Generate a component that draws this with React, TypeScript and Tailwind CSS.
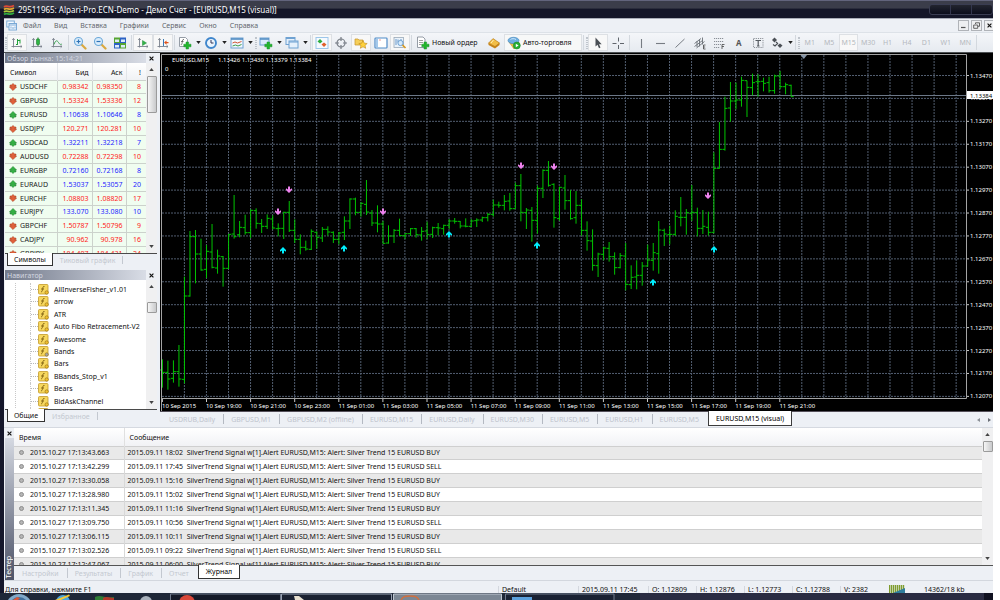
import type { ReactNode } from "react";
import clsx from "clsx";

type Quote = { symbol: string; bid: string; ask: string; spread: number; up: boolean };

const QUOTES: Quote[] = [
    { symbol: "USDCHF", bid: "0.98342", ask: "0.98350", spread: 8, up: false },
    { symbol: "GBPUSD", bid: "1.53324", ask: "1.53336", spread: 12, up: false },
    { symbol: "EURUSD", bid: "1.10638", ask: "1.10646", spread: 8, up: true },
    { symbol: "USDJPY", bid: "120.271", ask: "120.281", spread: 10, up: false },
    { symbol: "USDCAD", bid: "1.32211", ask: "1.32218", spread: 7, up: true },
    { symbol: "AUDUSD", bid: "0.72288", ask: "0.72298", spread: 10, up: false },
    { symbol: "EURGBP", bid: "0.72160", ask: "0.72168", spread: 8, up: true },
    { symbol: "EURAUD", bid: "1.53037", ask: "1.53057", spread: 20, up: true },
    { symbol: "EURCHF", bid: "1.08803", ask: "1.08820", spread: 17, up: false },
    { symbol: "EURJPY", bid: "133.070", ask: "133.080", spread: 10, up: true },
    { symbol: "GBPCHF", bid: "1.50787", ask: "1.50796", spread: 9, up: false },
    { symbol: "CADJPY", bid: "90.962", ask: "90.978", spread: 16, up: false },
    { symbol: "GBPJPY", bid: "184.407", ask: "184.431", spread: 24, up: false },
];

const INDICATORS = [
    "AllInverseFisher_v1.01",
    "arrow",
    "ATR",
    "Auto Fibo Retracement-V2",
    "Awesome",
    "Bands",
    "Bars",
    "BBands_Stop_v1",
    "Bears",
    "BidAskChannel",
    "",
];

const LOG = [
    ["2015.10.27 17:13:43.663", "2015.09.11 18:02", "BUY"],
    ["2015.10.27 17:13:42.299", "2015.09.11 17:45", "SELL"],
    ["2015.10.27 17:13:30.058", "2015.09.11 15:16", "BUY"],
    ["2015.10.27 17:13:28.980", "2015.09.11 15:02", "BUY"],
    ["2015.10.27 17:13:11.345", "2015.09.11 11:16", "BUY"],
    ["2015.10.27 17:13:09.750", "2015.09.11 10:56", "SELL"],
    ["2015.10.27 17:13:06.115", "2015.09.11 10:11", "BUY"],
    ["2015.10.27 17:13:02.526", "2015.09.11 09:22", "SELL"],
    ["2015.10.27 17:12:47.067", "2015.09.11 06:00", "BUY"],
];

const MENU = ["Файл", "Вид", "Вставка", "Графики", "Сервис", "Окно", "Справка"];
const TIMEFRAMES = ["M1", "M5", "M15", "M30", "H1", "H4", "D1", "W1", "MN"];
const CHART_TABS = [
    "USDRUB,Daily",
    "GBPUSD,M1",
    "GBPUSD,M2 (offline)",
    "EURUSD,M15",
    "EURUSD,Daily",
    "EURUSD,M30",
    "EURUSD,M5",
    "EURUSD,H1",
    "EURUSD,M5",
];

// high, low, open, close: measured down from y = 150, three units to a pixel
const BARS: [number, number, number, number][] = [
    [628, 713, 660, 667], [632, 719, 667, 687], [631, 698, 685, 665], [585, 710, 665, 687],
    [380, 700, 688, 438], [243, 440, 438, 260], [240, 400, 260, 312], [266, 362, 312, 360],
    [285, 384, 358, 304], [222, 355, 306, 352], [299, 371, 354, 318], [318, 410, 320, 355],
    [252, 357, 355, 253], [135, 266, 252, 260], [213, 262, 254, 232], [194, 254, 233, 248],
    [178, 264, 248, 181], [175, 236, 182, 220], [207, 249, 221, 229], [193, 237, 229, 205],
    [196, 238, 207, 234], [220, 259, 236, 235], [185, 267, 235, 187], [153, 246, 187, 241],
    [208, 279, 241, 268], [253, 313, 268, 292], [272, 302, 292, 297], [238, 300, 298, 244],
    [244, 296, 247, 262], [231, 276, 264, 238], [229, 257, 238, 246], [244, 279, 247, 268],
    [246, 283, 268, 249], [199, 270, 247, 213], [145, 237, 213, 147], [143, 196, 147, 187],
    [157, 200, 187, 160], [90, 195, 163, 186], [180, 228, 189, 219], [166, 247, 219, 222],
    [213, 281, 222, 280], [226, 281, 279, 258], [237, 279, 258, 241], [206, 258, 241, 257],
    [250, 267, 257, 251], [234, 258, 251, 236], [234, 263, 236, 254], [231, 272, 255, 244],
    [215, 267, 243, 254], [230, 264, 253, 233], [219, 256, 233, 234], [224, 254, 236, 226],
    [207, 237, 226, 213], [204, 221, 213, 214], [213, 235, 214, 228], [205, 232, 228, 229],
    [207, 231, 229, 213], [205, 231, 212, 210], [200, 216, 210, 203], [189, 214, 203, 193],
    [149, 200, 193, 165], [155, 173, 165, 166], [135, 181, 166, 154], [129, 182, 153, 176],
    [98, 176, 176, 107], [72, 214, 107, 187], [174, 237, 188, 180], [171, 275, 181, 211],
    [107, 251, 211, 115], [58, 144, 115, 61], [33, 110, 61, 106], [100, 233, 103, 203],
    [110, 212, 206, 112], [75, 179, 114, 152], [120, 209, 152, 206], [123, 221, 203, 166],
    [148, 257, 166, 241], [214, 302, 241, 272], [238, 362, 273, 346], [308, 381, 347, 312],
    [290, 331, 313, 294], [276, 335, 295, 320], [307, 374, 320, 353], [309, 355, 353, 317],
    [279, 421, 318, 403], [346, 417, 404, 382], [331, 418, 381, 376], [336, 407, 376, 348],
    [284, 350, 348, 330], [279, 362, 331, 308], [213, 371, 311, 240], [236, 288, 241, 252],
    [227, 283, 254, 253], [181, 258, 253, 199], [141, 229, 202, 202], [177, 254, 202, 188],
    [105, 213, 190, 187], [173, 259, 188, 235], [180, 252, 235, 229], [185, 257, 232, 247],
    [7, 250, 247, 55], [-84, 56, 55, -2], [-160, 2, -2, -125], [-204, -85, -126, -147],
    [-202, -122, -147, -150], [-220, -130, -150, -209], [-208, -99, -208, -188], [-229, -164, -187, -202],
    [-227, -160, -205, -205], [-217, -176, -206, -200], [-220, -172, -202, -178], [-226, -169, -178, -222],
    [-237, -183, -222, -190], [-202, -167, -190, -196], [-196, -160, -194, -160],
];

const SELLS = [[278, 212], [289, 190], [383, 212], [521, 166], [554, 167], [708, 196]];
const BUYS = [[283, 250], [344, 248], [449, 234], [537, 245], [653, 282], [714, 249]];

const PRICES = [
    "1.13470", "1.13370", "1.13270", "1.13170", "1.13070", "1.12970", "1.12870", "1.12770",
    "1.12670", "1.12570", "1.12470", "1.12370", "1.12270", "1.12170", "1.12070",
];

const TIMES = [
    "10 Sep 2015", "10 Sep 19:00", "10 Sep 21:00", "10 Sep 23:00", "11 Sep 01:00",
    "11 Sep 03:00", "11 Sep 05:00", "11 Sep 07:00", "11 Sep 09:00", "11 Sep 11:00",
    "11 Sep 13:00", "11 Sep 15:00", "11 Sep 17:00", "11 Sep 19:00", "11 Sep 21:00",
];

/* ---------- icons ---------- */

function Icon({ children }: { children: ReactNode }) {
    return (
        <svg viewBox="0 0 14 14" fill="none" className="block size-[14px] shrink-0" aria-hidden="true">
            {children}
        </svg>
    );
}

const Axes = () => <path d="M3.5 2.5v9M1.5 10.5h10.5M2.3 4l1.2-1.6L4.7 4M10.6 9.3l1.4 1.2-1.4 1.2" stroke="#7a818c" strokeWidth=".9" />;

const PlusBadge = () => <path d="M8 6h2.6v2.2H13v2.6h-2.4V13H8v-2.2H5.8V8.2H8z" fill="#21b52b" stroke="#1f9030" strokeWidth=".5" />;

const BarsIcon = () => <Icon><Axes /><path d="M7.5 3v6M7.5 8.5H6M7.5 4.5H10M10 3.5v4" stroke="#23a13a" /></Icon>;
const CandlesIcon = () => <Icon><Axes /><path d="M8 1.5v8.5" stroke="#1d7d2b" /><rect x="6.5" y="3" width="3" height="5.5" rx=".6" fill="#2fb544" stroke="#1d7d2b" strokeWidth=".6" /></Icon>;
const LineIcon = () => <Icon><Axes /><path d="M4 8.5C5.5 4 7 4 8.5 6.5S11 8.5 12 8" stroke="#3fa455" /></Icon>;
const ZoomIcon = ({ minus }: { minus?: boolean }) => (
    <Icon>
        <path d="M8.5 8.5l4 4" stroke="#d9a83f" strokeWidth="2.2" strokeLinecap="round" />
        <circle cx="5.5" cy="5.5" r="4" fill="#d9ecfb" stroke="#6ba8d8" strokeWidth="1.1" />
        <path d={minus ? "M3.5 5.5h4" : "M3.5 5.5h4M5.5 3.5v4"} stroke="#2f73b5" strokeWidth="1.2" />
    </Icon>
);
const TileIcon = () => (
    <Icon>
        <rect x="1" y="1.5" width="6" height="5.5" fill="#56a531" /><rect x="7" y="1.5" width="6" height="5.5" fill="#2c62c4" />
        <rect x="1" y="7" width="6" height="5.5" fill="#2c62c4" /><rect x="7" y="7" width="6" height="5.5" fill="#56a531" />
        <path d="M2 3.5h4V6H2zM8 3.5h4V6H8zM2 9h4v2.5H2zM8 9h4v2.5H8z" fill="#dcebf8" />
    </Icon>
);
const ScrollIcon = () => <Icon><Axes /><path d="M6.5 4.5v5l4-2.5z" fill="#35b34a" stroke="#1d8a30" strokeWidth=".5" /></Icon>;
const ShiftIcon = () => <Icon><Axes /><path d="M7.5 3v7" stroke="#3a7ab8" /><path d="M8 6.5l2.500-2v1.500h2v1.200h-2v1.500z" fill="#e0531c" /></Icon>;
const IndicatorAddIcon = () => <Icon><path d="M1.5 1.5h6l2 2v7h-8z" fill="#fff" stroke="#8a929c" strokeWidth=".9" /><path d="M6 3.500c-1.500-.5-1.500 1-1.800 3S3.500 9 2.800 8.500M3 5.500h2.500" stroke="#555" strokeWidth=".8" /><PlusBadge /></Icon>;
const ClockIcon = () => <Icon><circle cx="7" cy="7" r="5" fill="#eaf4fd" stroke="#3f86cc" strokeWidth="1.900" /><path d="M7 4v3h2.500" stroke="#335" /></Icon>;
const TemplateIcon = () => <Icon><rect x="1" y="2" width="12" height="10" fill="#f2f8fe" stroke="#6fa2d2" /><path d="M1 3h12" stroke="#4f8bc2" strokeWidth="1.600" /><path d="M2.500 7l2.500-1 2.500 1 4-1.500" stroke="#d05533" /><path d="M2.500 10l3-1 2.500 1 3.500-1.500" stroke="#3a9c4a" /></Icon>;
const NewChartIcon = () => <Icon><rect x="1" y="2" width="9" height="7" fill="#dbeafb" stroke="#6fa2d2" /><path d="M1 3h9" stroke="#4f8bc2" strokeWidth="1.500" /><PlusBadge /></Icon>;
const ProfilesIcon = () => <Icon><rect x="1" y="1.500" width="9" height="7" fill="#e6f1fc" stroke="#6fa2d2" /><rect x="4" y="5" width="9" height="7" fill="#e6f1fc" stroke="#6fa2d2" /><path d="M1 2.500h9M4 6h9" stroke="#6fa2d2" strokeWidth="1.200" /></Icon>;
const MarketIcon = () => <Icon><rect x="1" y="1.500" width="12" height="11" fill="#f5faff" stroke="#9cc6ea" /><path d="M2.500 5.500L5 3l2.500 2.500L5 7.500z" fill="#2fae3f" /><path d="M6.500 8.500L9 6.500l2.500 2L9 11z" fill="#e0602c" /></Icon>;
const TargetIcon = () => <Icon><circle cx="7" cy="7" r="4" stroke="#777d85" strokeWidth="1.200" /><path d="M7 1v4M7 9v4M1 7h4M9 7h4" stroke="#777d85" strokeWidth="1.200" /></Icon>;
const FavIcon = () => <Icon><path d="M1 3h3l1 1h4v5H1z" fill="#f6cf5a" stroke="#c4932a" strokeWidth=".7" /><path d="M9 4.500l1.300 2.700 2.900.3-2.200 1.900.7 2.900L9 10.800l-2.700 1.500.7-2.900-2.200-1.900 2.900-.3z" fill="#ffd23c" stroke="#bd8a1a" strokeWidth=".6" /></Icon>;
const TerminalIcon = () => <Icon><rect x="1" y="2" width="12" height="10" rx=".8" fill="#fff" stroke="#4f8bc8" strokeWidth="1.200" /><path d="M3 2.500v9" stroke="#8dbbe6" strokeWidth="1.600" /><path d="M5.500 4h1" stroke="#d33" /></Icon>;
const TesterIcon = () => <Icon><rect x="1" y="1.500" width="9.500" height="10" fill="#eaf3fb" stroke="#9aa8b8" strokeWidth=".8" /><path d="M3 3v6M5 3.500v3M8 3v4" stroke="#5b8fc4" strokeWidth=".9" /><circle cx="7.500" cy="7" r="2.600" fill="#d6eafb" stroke="#6fa2d2" /><path d="M9.500 9l3 3" stroke="#d99a1f" strokeWidth="1.700" /></Icon>;
const OrderIcon = () => <Icon><path d="M1.500 1h5.500l2 2v8.500H1.500z" fill="#fff" stroke="#8a929c" strokeWidth=".9" /><path d="M3 4.500h4M3 6.500h4M3 8.500h2.500" stroke="#888" strokeWidth=".8" /><PlusBadge /></Icon>;
const EditorIcon = () => <Icon><path d="M1.500 7L6 3l6.500 4v2L8 12.500 1.500 9z" fill="#c8841a" /><path d="M1.500 7.200L6 2.500l6.500 4.500L8 10.500z" fill="#f2be48" stroke="#a96f10" strokeWidth=".5" /><path d="M4 7l2.500-3" stroke="#fff0b8" /></Icon>;
const AutoIcon = () => <Icon><path d="M2 6l5 7 5-7z" fill="#f0c243" stroke="#b58a1f" strokeWidth=".5" /><ellipse cx="6.500" cy="4.500" rx="5.500" ry="3.200" fill="#6fb0e2" stroke="#3a7fb8" strokeWidth=".6" /><path d="M3.500 3.500c1-1 4-1.200 5.500 0" stroke="#cfe6f8" /><circle cx="9.800" cy="9.500" r="3.500" fill="#27b034" stroke="#117c20" strokeWidth=".5" /><path d="M8.800 7.700v3.600l2.800-1.800z" fill="#fff" /></Icon>;
const CursorIcon = () => <Icon><path d="M4.500 1.500v9l2-1.800 1.500 3.500 1.500-.7L8 8.200h2.700z" fill="#4a4f55" /></Icon>;
const CrossIcon = () => <Icon><path d="M7.500 1.500v4M7.500 9v4M1.500 7.500h4M9 7.500h4" stroke="#60656c" /></Icon>;
const VLineIcon = () => <Icon><path d="M7.500 3v9" stroke="#777c83" strokeWidth="1.100" /></Icon>;
const HLineIcon = () => <Icon><path d="M3 7.500h9" stroke="#777c83" strokeWidth="1.100" /></Icon>;
const TrendIcon = () => <Icon><path d="M2.500 11.500l9-8.500" stroke="#777c83" /></Icon>;
const ChannelIcon = () => <Icon><path d="M1.500 10.500l8-6M3.500 12l8-6.500M1.500 7.500L8 2.500M4 5v6M6.500 3.500v7M9.500 1.500v7" stroke="#6a6f76" strokeWidth=".9" /><path d="M12.500 9h-2v4h2M10.500 11h1.700" stroke="#444" strokeWidth=".8" /></Icon>;
const FiboIcon = () => <Icon><path d="M2 2.500h10M2 5.500h10M2 8.500h7M2 11.500h6" stroke="#8a8f96" strokeDasharray="1.200 .8" /><path d="M12.500 8.500H10V13M10 10.500h2" stroke="#444" strokeWidth=".8" /></Icon>;
const LabelIcon = () => <Icon><rect x="2.500" y="2.500" width="9.500" height="9" stroke="#8a8f96" strokeDasharray="1.200 1" /><path d="M4.500 4.500H10M7.200 4.500V10M6 10h2.500" stroke="#555b61" strokeWidth="1.200" /></Icon>;
const ArrowsIcon = () => <Icon><path d="M4.500 1.500L7 4 4.500 6.500 2 4z" fill="#4a4f55" /><path d="M6 6l2 2M3 8.500L5 10l3-3" stroke="#4a4f55" strokeWidth="1.100" /><path d="M10 7.500l2.500 2-2.500 2.500-2.500-2.500z" fill="#4a4f55" /></Icon>;

function Caret() {
    return <svg viewBox="0 0 6 4" className="h-[3px] w-[5px] shrink-0" aria-hidden="true"><path d="M0 0h6L3 4z" fill="#222" /></svg>;
}

function Cross() {
    return <svg viewBox="0 0 6 6" className="size-[5px]" aria-hidden="true"><path d="M.7.7l4.600 4.600M5.300.7L.7 5.300" stroke="#111" strokeWidth="1.400" /></svg>;
}

function QuoteArrow({ up }: { up: boolean }) {
    return (
        <svg viewBox="0 0 8 8" className="size-2 shrink-0" aria-hidden="true">
            {up
                ? <path d="M4 .4L7.600 4H5.600v.6H7v1.400H5.400L4 7.600 2.600 6H1V4.600h1.400V4H.4z" fill="#34b044" stroke="#1c7f2c" strokeWidth=".5" />
                : <path d="M4 7.600L.4 4h2v-.6H1V2h1.600L4 .4 5.400 2H7v1.400H5.600V4h2z" fill="#e0603a" stroke="#a83a1a" strokeWidth=".5" />}
        </svg>
    );
}

/* ---------- toolbar ---------- */

function Tool({ label, pressed, wide, children }: { label: string; pressed?: boolean; wide?: boolean; children: ReactNode }) {
    return (
        <button
            type="button"
            aria-label={label}
            className={clsx(
                "flex h-[17px] items-center",
                wide ? "w-[26px] shrink-0 gap-1 pl-0.5" : "w-5 shrink justify-center",
                pressed && "border border-[#dde0e4] bg-[#f8f8f8]",
            )}
        >
            {children}
            {wide && <Caret />}
        </button>
    );
}

const Sep = () => <span className="mx-px h-[15px] w-px shrink-0 bg-[#d3d8de]" />;
const Grip = () => <span className="ml-px h-3 w-0.5 shrink-0 border-x border-dotted border-[#bfc5cc]" />;

function Toolbar() {
    return (
        <div className="flex h-5 items-center border-t border-[#dde2e8] bg-linear-to-b from-[#f4f6f9] to-[#e6eaf0]">
            <Grip />
            <Tool label="Бары" pressed><BarsIcon /></Tool>
            <Tool label="Свечи"><CandlesIcon /></Tool>
            <Tool label="Линия"><LineIcon /></Tool>
            <Sep />
            <Tool label="Увеличить"><ZoomIcon /></Tool>
            <Tool label="Уменьшить"><ZoomIcon minus /></Tool>
            <Tool label="Окна"><TileIcon /></Tool>
            <Sep />
            <Tool label="Автопрокрутка" pressed><ScrollIcon /></Tool>
            <Tool label="Сдвиг графика" pressed><ShiftIcon /></Tool>
            <Sep />
            <Tool label="Индикаторы" wide><IndicatorAddIcon /></Tool>
            <Tool label="Периоды" wide><ClockIcon /></Tool>
            <Tool label="Шаблоны" wide><TemplateIcon /></Tool>
            <Grip />
            <Tool label="Новый график" wide><NewChartIcon /></Tool>
            <Tool label="Профили" wide><ProfilesIcon /></Tool>
            <Sep />
            <div className="flex w-[98px] shrink-0">
                <Tool label="Обзор рынка" pressed><MarketIcon /></Tool>
                <Tool label="Окно данных"><TargetIcon /></Tool>
                <Tool label="Навигатор" pressed><FavIcon /></Tool>
                <Tool label="Терминал"><TerminalIcon /></Tool>
                <Tool label="Тестер" pressed><TesterIcon /></Tool>
            </div>
            <Sep />
            <button type="button" className="flex h-[17px] w-[71px] shrink-0 items-center gap-0.5 pl-[3px] whitespace-nowrap">
                <OrderIcon />Новый ордер
            </button>
            <Tool label="MetaEditor"><EditorIcon /></Tool>
            <button type="button" className="flex h-[17px] w-[78px] shrink-0 items-center gap-0.5 border border-[#dde0e4] bg-[#f7f8f8] pl-0.5 whitespace-nowrap">
                <AutoIcon />Авто-торговля
            </button>
            <Sep />
            <Grip />
            <Tool label="Курсор" pressed><CursorIcon /></Tool>
            <Tool label="Перекрестие"><CrossIcon /></Tool>
            <Sep />
            <div className="flex w-[137px] shrink-0">
                <Tool label="Вертикальная линия"><VLineIcon /></Tool>
                <Tool label="Горизонтальная линия"><HLineIcon /></Tool>
                <Tool label="Трендовая линия"><TrendIcon /></Tool>
                <Tool label="Канал"><ChannelIcon /></Tool>
                <Tool label="Фибоначчи"><FiboIcon /></Tool>
                <Tool label="Текст"><span className="text-[8px] font-bold text-[#555]">A</span></Tool>
                <Tool label="Метка"><LabelIcon /></Tool>
            </div>
            <Tool label="Стрелки" wide><ArrowsIcon /></Tool>
            <Sep />
            <Grip />
            <div className="flex w-[175px] shrink-0 text-[#b4b8bd]">
                {TIMEFRAMES.map((tf) => (
                    <Tool key={tf} label={tf} pressed={tf === "M15"}>{tf}</Tool>
                ))}
            </div>
            <Sep />
        </div>
    );
}

/* ---------- docked panels ---------- */

function PanelHeader({ title }: { title: string }) {
    return (
        <div className="flex h-[10px] items-center">
            <h2 className="flex h-full flex-1 items-center bg-linear-to-r from-[#747b8c] to-[#d9dde6] pl-0.5 text-[#d3d7e0]">{title}</h2>
            <button type="button" aria-label="Закрыть" className="flex w-[11px] justify-center"><Cross /></button>
        </div>
    );
}

function ScrollBar({ thumb }: { thumb: string }) {
    return (
        <div className="flex w-[11px] shrink-0 flex-col items-center bg-[#f0f0f1]">
            <button type="button" aria-label="Вверх" className="flex h-[13px] items-center">
                <svg viewBox="0 0 6 4" className="h-[3px] w-[5px]" aria-hidden="true"><path d="M0 4h6L3 0z" fill="#444" /></svg>
            </button>
            <div className={clsx("w-[10px] rounded-[1px] border border-[#9b9b9b] bg-linear-to-r from-[#f6f6f6] to-[#c9cacc]", thumb)} />
            <button type="button" aria-label="Вниз" className="mt-auto flex h-[13px] items-center">
                <svg viewBox="0 0 6 4" className="h-[3px] w-[5px]" aria-hidden="true"><path d="M0 0h6L3 4z" fill="#444" /></svg>
            </button>
        </div>
    );
}

function PanelTabs({ active, idle }: { active: string; idle: string }) {
    return (
        <div className="flex h-[13px] items-start border-t border-[#4a4a4a] pl-0.5">
            <button type="button" className="-mt-px h-[13px] border border-t-0 border-[#333] bg-white px-1.5">{active}</button>
            <button type="button" className="h-3 px-[7px] text-[#c3c8d0]">{idle}</button>
            <span className="mt-0.5 h-2 w-px bg-[#c3c8d0]" />
        </div>
    );
}

function MarketWatch() {
    return (
        <section>
            <PanelHeader title="Обзор рынка: 15:14:21" />
            <div className="flex h-[190px] overflow-hidden bg-white">
                <table className="h-[197px] flex-1 table-fixed">
                    <thead>
                        <tr className="h-[17px] bg-linear-to-b from-white to-[#f0f2f5] text-right">
                            <th className="w-[52px] pt-0.5 pl-[5px] text-left font-normal">Символ</th>
                            <th className="w-[35px] border-l border-[#e2e5e9] pt-0.5 pr-[3px] font-normal">Бид</th>
                            <th className="w-[34px] border-l border-[#e2e5e9] pt-0.5 pr-[3px] font-normal">Аск</th>
                            <th className="border-l border-[#e2e5e9] pt-0.5 pr-[5px] font-normal">!</th>
                        </tr>
                    </thead>
                    <tbody>
                        {QUOTES.map((q) => (
                            <tr key={q.symbol} className={clsx("border-t border-[#ccd2cc] bg-[#f0fdf0] text-right", q.up ? "text-[#1d1dff]" : "text-[#ff1a1a]")}>
                                <td className="pl-1 text-left text-[#222]">
                                    <span className="flex items-center gap-[3px]"><QuoteArrow up={q.up} />{q.symbol}</span>
                                </td>
                                <td className="border-l border-[#ccd2cc] pr-[3px]">{q.bid}</td>
                                <td className="border-l border-[#ccd2cc] pr-[3px]">{q.ask}</td>
                                <td className="border-l border-[#ccd2cc] pr-[5px]">{q.spread}</td>
                            </tr>
                        ))}
                    </tbody>
                </table>
                <ScrollBar thumb="h-[37px]" />
            </div>
            <PanelTabs active="Символы" idle="Тиковый график" />
        </section>
    );
}

function Navigator() {
    return (
        <section>
            <PanelHeader title="Навигатор" />
            <div className="flex h-[129px] overflow-hidden bg-white">
                <ul className="mt-[3px] ml-[10px] flex h-[137px] min-w-0 flex-1 flex-col overflow-hidden border-l border-dotted border-[#c8c8c8]">
                    {INDICATORS.map((name) => (
                        <li key={name} className="ml-3.5 flex flex-1 items-center border-l border-dotted border-[#c8c8c8] whitespace-nowrap">
                            <span className="w-[7px] shrink-0 border-t border-dotted border-[#b8b8b8]" />
                            <svg viewBox="0 0 11 11" className="mr-[5px] size-[11px] shrink-0" aria-hidden="true">
                                <rect x=".5" y=".5" width="9.500" height="9.500" rx="1" fill="#f6d75e" stroke="#c49a28" strokeWidth=".8" />
                                <path d="M6.500 2.500c-1.800-.5-1.500 1-1.900 3S3.800 8 3 7.600M3 5h3" stroke="#7a5c10" strokeWidth=".9" fill="none" />
                                <circle cx="8.700" cy="8.500" r="1.700" fill={name === "Bands" ? "#a4a4a4" : "#f2c02e"} stroke="#8f6d14" strokeWidth=".6" />
                            </svg>
                            {name}
                        </li>
                    ))}
                </ul>
                <ScrollBar thumb="mt-[9px] h-[11px]" />
            </div>
            <PanelTabs active="Общие" idle="Избранное" />
        </section>
    );
}

/* ---------- chart ---------- */

function Chart() {
    const y = (v: number) => 150 + v / 3;
    return (
        <svg viewBox="160 53 833 358" className="block h-auto w-full bg-black text-[6px]" role="img" aria-label="EURUSD,M15">
            <g stroke="#525e70" strokeDasharray="2 1" fill="none">
                {Array.from({ length: 36 }, (_, i) => (
                    <path key={i} d={`M${184.4 + i * 22.05} 55V398`} />
                ))}
                {PRICES.map((p, i) => (
                    <path key={p} d={`M162 ${75.5 + i * 22.92}H966`} />
                ))}
            </g>
            <path d="M162 95.500H966" stroke="#6c7888" />
            <g stroke="#00c400" fill="none">
                {BARS.map(([high, low, open, close], i) => {
                    const x = 162.4 + i * 5.515;
                    return <path key={i} d={`M${x} ${y(high)}V${y(low)}M${x - 2.5} ${y(open)}H${x}M${x} ${y(close)}h2.5`} />;
                })}
            </g>
            {SELLS.map(([cx, cy]) => (
                <path key={cx} d={`M${cx - 1} ${cy - 3.5}h2v3l2-1.200v1.700l-3 3-3-3v-1.700l2 1.200z`} fill="#ee82ee" />
            ))}
            {BUYS.map(([cx, cy]) => (
                <path key={cx} d={`M${cx - 1} ${cy + 3.5}h2v-3l2 1.200v-1.700l-3-3-3 3v1.700l2-1.200z`} fill="#00f0ff" />
            ))}
            <path d="M161.500 411V54.500H966.500V398.500H162" stroke="#a4a4a4" fill="none" />
            <path d="M800.500 55h6.500l-3.200 4z" fill="#8796a8" />
            <g fill="#fff">
                <text x="172" y="62">EURUSD,M15</text>
                <text x="218" y="62">1.13426 1.13430 1.13379 1.13384</text>
                <text x="165" y="71">0</text>
                {PRICES.map((p, i) => (
                    <g key={p}>
                        <path d={`M967 ${75.5 + i * 22.92}h2`} stroke="#c8c8c8" />
                        <text x="970" y={77.5 + i * 22.92}>{p}</text>
                    </g>
                ))}
                {TIMES.map((t, i) => (
                    <g key={t}>
                        <path d={`M${162.4 + i * 44.1} 399v3`} stroke="#c8c8c8" />
                        <text x={162 + i * 44.1} y="407.500">{t}</text>
                    </g>
                ))}
            </g>
            <rect x="967" y="91" width="26" height="8" fill="#fff" />
            <text x="970" y="97.500" fill="#000">1.13384</text>
        </svg>
    );
}

function ChartTabs() {
    return (
        <div className="flex h-4 items-start border-t border-[#55505a] pl-0.5 whitespace-nowrap text-[#c0c4cd]">
            {CHART_TABS.map((tab, i) => (
                <button key={i} type="button" className="mt-0.5 h-[10px] border-r border-[#b4b9c2] pr-2 pl-[7px] nth-9:border-r-transparent">{tab}</button>
            ))}
            <button type="button" className="-mt-px h-[15px] border border-t-0 border-[#3c3c3c] bg-white px-[7px] text-black">EURUSD,M15 (visual)</button>
            <div className="mt-1.5 mr-0.5 ml-auto flex gap-2">
                <svg viewBox="0 0 3 4" className="h-1 w-[3px]" aria-hidden="true"><path d="M3 0v4L0 2z" fill="#8a8f96" /></svg>
                <svg viewBox="0 0 3 4" className="h-1 w-[3px]" aria-hidden="true"><path d="M0 0v4l3-2z" fill="#6a6f76" /></svg>
            </div>
        </div>
    );
}

/* ---------- tester ---------- */

function Tester() {
    return (
        <section className="flex h-[153px] border-t border-[#d5d9e0]">
            <div className="flex w-[10px] shrink-0 flex-col items-center">
                <button type="button" aria-label="Закрыть" className="flex h-[10px] items-center"><Cross /></button>
                <div className="flex w-[9px] flex-1 items-center bg-linear-to-b from-[#d5d9e2] to-[#4e5468] pb-0.5 text-white">
                    <h2 className="mt-auto rotate-180 [writing-mode:vertical-rl]">Тестер</h2>
                </div>
            </div>
            <div className="min-w-0 flex-1">
                <div className="flex h-[137px] overflow-hidden bg-white">
                    <table className="h-[143px] flex-1 table-fixed">
                        <thead>
                            <tr className="h-[18px] bg-linear-to-b from-white to-[#f1f2f5] text-left">
                                <th className="w-[110px] pt-0.5 pl-[5px] font-normal">Время</th>
                                <th className="border-l border-[#e0e0e0] pt-0.5 pl-[5px] font-normal">Сообщение</th>
                            </tr>
                        </thead>
                        <tbody>
                            {LOG.map(([time, bar, side]) => (
                                <tr key={time} className="border-t border-[#cfcfcf] odd:bg-[#e9e9e9]">
                                    <td className="pl-[5px]">
                                        <span className="flex items-center gap-1.5">
                                            <span className="size-[5px] rounded-full border border-[#8d8d8d] bg-[#b5b5b5]" />{time}
                                        </span>
                                    </td>
                                    <td className="border-l border-[#d8d8d8] pl-[3px] whitespace-pre">
                                        {`${bar}  SilverTrend Signal w[1].Alert EURUSD,M15: Alert: Silver Trend 15 EURUSD ${side}`}
                                    </td>
                                </tr>
                            ))}
                        </tbody>
                    </table>
                    <ScrollBar thumb="h-[11px]" />
                </div>
                <div className="flex h-[15px] items-start border-t border-[#555] pl-px text-[#c3c8d0]">
                    {["Настройки", "Результаты", "График", "Отчет"].map((tab) => (
                        <button key={tab} type="button" className="mt-0.5 h-[10px] border-r border-[#c3c8d0] pr-2 pl-[7px] nth-4:border-r-transparent">{tab}</button>
                    ))}
                    <button type="button" className="-mt-px h-[14px] border border-t-0 border-[#333] bg-white px-[7px] text-black">Журнал</button>
                </div>
            </div>
        </section>
    );
}

function StatusBar() {
    return (
        <footer className="flex h-[13px] items-end overflow-hidden border-t border-[#d3d7de] leading-[7px] whitespace-nowrap">
            <span className="flex-1 pl-px">Для справки, нажмите F1</span>
            <span className="w-20 border-l border-[#d3d7de] pl-[3px]">Default</span>
            <span className="w-[70px] border-l border-[#d3d7de] pl-[3px]">2015.09.11 17:45</span>
            <span className="w-12 border-l border-[#d3d7de] pl-[3px]">O: 1.12809</span>
            <span className="w-12 border-l border-[#d3d7de] pl-[3px]">H: 1.12876</span>
            <span className="w-12 border-l border-[#d3d7de] pl-[3px]">L: 1.12773</span>
            <span className="w-12 border-l border-[#d3d7de] pl-[3px]">C: 1.12788</span>
            <span className="w-[47px] border-l border-[#d3d7de] pl-[3px]">V: 2382</span>
            <svg viewBox="0 0 16 8" className="mr-[19px] ml-0.5 h-2 w-4" aria-hidden="true">
                <path d="M.5 0v8M2.500 0v8M4.500 0v8M6.500 0v8M8.500 0v7M10.500 0v6M12.500 0v5M14.500 0v4" stroke="#7f9c2e" strokeWidth="1.400" />
                <path d="M4 8L16 3v5z" fill="#2f7d9c" />
            </svg>
            <span className="w-[69px]">14362/18 kb</span>
        </footer>
    );
}

function TaskBar() {
    return (
        <div className="h-[7px] overflow-hidden bg-[#2a2c42]">
            <svg viewBox="0 0 993 7" preserveAspectRatio="xMinYMin slice" className="block h-[7px] w-full" aria-hidden="true">
                <rect width="640" height="7" fill="#1f2838" />
                <circle cx="19" cy="14" r="13" fill="#7fa9c9" />
                <circle cx="19" cy="14" r="10" fill="#3f6f9c" />
                <path d="M13 7l4-3 3 1-2 2z" fill="#d9583a" />
                <circle cx="63" cy="9" r="7" fill="#4aa4e0" />
                <path d="M55 7L69 1.500l1 1.500-9 4z" fill="#f2c838" />
                <path d="M95 4c6-3 10 2 19 0v3H95z" fill="#2f7d36" />
                <path d="M103 5c4-2 7 0 11 0v2h-11z" fill="#b3392c" />
                <circle cx="146" cy="9" r="6" fill="#a9b2bc" />
                <path d="M170.500 7V1H280.500V7" fill="#151a28" stroke="#707a8c" />
                <circle cx="187" cy="10" r="8" fill="#d9483a" />
                <path d="M281.500 7V1H391.500V7" fill="#1b2232" stroke="#9aa3b3" />
                <path d="M295 7l-1-4h5l5 4z" fill="#e8e0d0" />
                <path d="M393.500 7V1H501.500V7" fill="#7c8794" stroke="#c0c8d2" />
                <path d="M401 7c2-4 5-4 9-4s7 0 9 4" fill="none" stroke="#cf7040" strokeWidth="1.500" />
                <path d="M505.500 7V1H614V7" fill="#1a2233" stroke="#707a8c" />
                <path d="M512 7V4h20v3z" fill="#5aa0dc" />
                <rect x="984" width="9" height="7" fill="#0f1120" />
            </svg>
        </div>
    );
}

/* ---------- window ---------- */

function TitleBar() {
    return (
        <header className="flex h-[18px] items-center border-t border-[#62647c] bg-linear-to-b from-[#3b3d4a] from-40% to-[#141628] to-50% pl-[3px]">
            <svg viewBox="0 0 12 12" className="mr-[3px] size-3" fill="none" strokeWidth="1.700" aria-hidden="true">
                <path d="M1 3c3-2.500 5 1.500 10-1.500" stroke="#e04a36" />
                <path d="M1 5.500C4 3 6 7 11 4" stroke="#e0a832" />
                <path d="M1 8c3-2.500 5 1.500 10-1.500" stroke="#a8c838" />
                <path d="M1 10.500C4 8 6 12 11 9" stroke="#2faa40" />
            </svg>
            <h1 className="flex-1 text-[8px] whitespace-nowrap text-white">29511965: Alpari-Pro.ECN-Demo - Демо Счет - [EURUSD,M15 (visual)]</h1>
            <div className="flex h-[11px] w-16 divide-x divide-[#33364e] rounded-[3px] border border-[#3a3d52] bg-linear-to-b from-[#23252f] to-[#0c0e1c]">
                <button type="button" aria-label="Свернуть" className="flex-1" />
                <button type="button" aria-label="Развернуть" className="flex-1" />
                <button type="button" aria-label="Закрыть" className="flex-1" />
            </div>
        </header>
    );
}

function MenuBar() {
    return (
        <nav className="flex h-[14px] items-center gap-[13px] border-t border-[#a9adb8] pl-0.5 text-[#63676d]">
            <svg viewBox="0 0 11 11" className="-mr-[7px] size-[11px]" fill="#f4f9ff" stroke="#6fa2d2" strokeWidth=".9" aria-hidden="true">
                <rect x=".8" y="1" width="7.500" height="6" />
                <rect x="3" y="3.500" width="7.500" height="6.500" />
                <path d="M3 5h7.500M5 8.500V6.500M7 9V7M9 8.500v-2" />
            </svg>
            {MENU.map((item) => <button key={item} type="button">{item}</button>)}
            <div className="ml-auto flex gap-0.5">
                <button type="button" aria-label="Свернуть окно" className="flex size-[11px] items-center justify-center border border-[#b0b3b8] bg-[#eeeff1]">
                    <svg viewBox="0 0 7 7" className="size-[7px]" aria-hidden="true"><path d="M1 5.500h4.500" stroke="#555" strokeWidth="1.200" /></svg>
                </button>
                <button type="button" aria-label="Восстановить окно" className="flex size-[11px] items-center justify-center border border-[#b0b3b8] bg-[#eeeff1]">
                    <svg viewBox="0 0 7 7" className="size-[7px]" fill="none" stroke="#555" strokeWidth=".9" aria-hidden="true"><path d="M2.500 2V.8h4v3.500H5M.7 3h4v3.300h-4z" /></svg>
                </button>
                <button type="button" aria-label="Закрыть окно" className="flex h-[11px] w-[9px] items-center justify-center border border-r-0 border-[#b0b3b8] bg-[#eeeff1]">
                    <Cross />
                </button>
            </div>
        </nav>
    );
}

export default function App() {
    return (
        <div className="min-h-screen overflow-hidden bg-white pr-[7px] font-['Noto_Sans',sans-serif] text-[7px] leading-none text-[#111]">
            <TitleBar />
            <div className="border-l-4 border-[#15172b] bg-[#edf0f5]">
                <MenuBar />
                <Toolbar />
                <main className="flex border-t border-[#4b4f52]">
                    <aside className="flex w-[153px] shrink-0 flex-col gap-1 pl-px">
                        <MarketWatch />
                        <Navigator />
                    </aside>
                    <section className="ml-[3px] min-w-0 flex-1">
                        <Chart />
                        <ChartTabs />
                    </section>
                </main>
                <Tester />
                <StatusBar />
            </div>
            <TaskBar />
        </div>
    );
}
